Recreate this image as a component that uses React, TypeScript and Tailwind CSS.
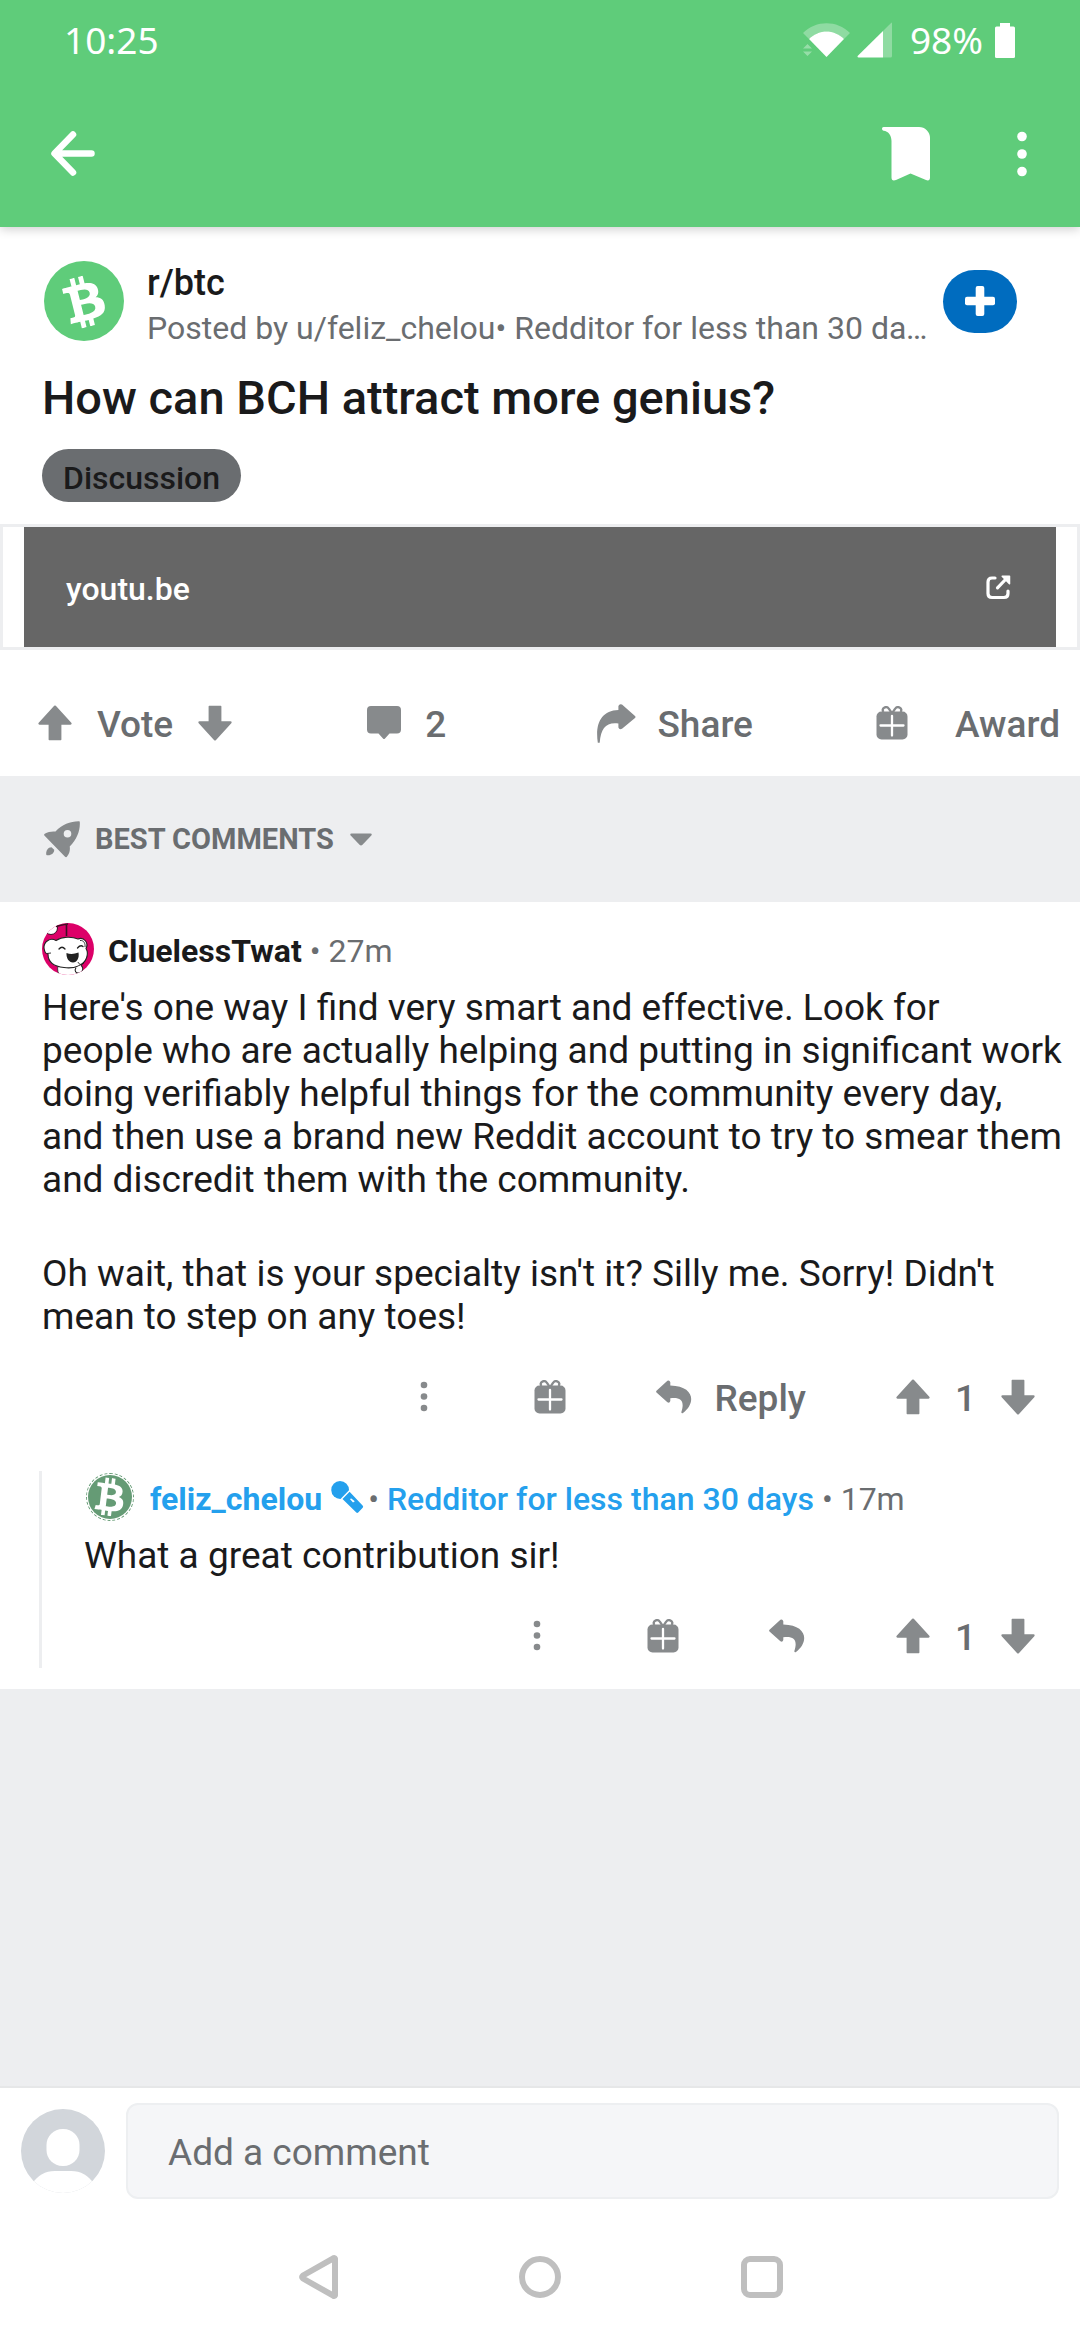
import React from "react";
import { FaBtc } from "react-icons/fa";

type IconProps = { className?: string };

function WifiIcon() {
  return (
    <svg width="47" height="34" viewBox="0 0 47 34" fill="#fff" aria-hidden="true">
      <path d="M0 10 C13 -3 34 -3 47 10 L41 16 C31 6 16 6 6 16 Z" opacity=".3" />
      <path d="M6 16 C16 6 31 6 41 16 L23.5 34 Z" />
      <path d="M4.5 21 L9 25.500 H0 Z M0 28.500 H9 L4.500 33 Z" opacity=".35" />
    </svg>
  );
}

function SignalIcon() {
  return (
    <svg width="35" height="36" viewBox="0 0 35 36" fill="#fff" aria-hidden="true">
      <path d="M26 9 L34.300 .7 Q35 .3 35 1.500 V34 Q35 35.500 33.500 35.500 H26 Z" opacity=".3" />
      <path d="M26 9 V35.500 H1.500 Q0 35.200 .6 34 Z" />
    </svg>
  );
}

function BatteryIcon() {
  return (
    <svg width="20" height="35" viewBox="0 0 20 35" fill="#fff" aria-hidden="true">
      <rect x="5" y="0" width="10" height="8" />
      <rect x="0" y="3.500" width="20" height="31.500" rx="1.500" />
    </svg>
  );
}

function BackIcon() {
  return (
    <svg width="44" height="46" viewBox="0 0 44 46" fill="none" stroke="#fff" strokeWidth="6.500" strokeLinecap="round" strokeLinejoin="round" aria-hidden="true">
      <path d="M22 3.500 L3.500 22.500 L22 41.500 M4 22.500 H40.500" />
      <path d="M9 17.500 L4 22.500 L9 27.500 Z" fill="#fff" strokeWidth="2" />
    </svg>
  );
}

function BookmarkIcon() {
  return (
    <svg width="48" height="54" viewBox="0 0 48 54" fill="#fff" aria-hidden="true">
      <path d="M1.700 0 H37 A11 11 0 0 1 48 11 V50.500 C48 53 46.500 54 44 53 L28.500 46.500 L14 53 C11 54.200 9.500 53 9.500 50.500 V14 C9.500 8 6 4 1.700 3.700 C-.5 3.500 -.5 0 1.700 0 Z" />
    </svg>
  );
}

function HeaderDots() {
  return (
    <svg width="10" height="46" viewBox="0 0 10 46" fill="#fff" aria-hidden="true">
      <circle cx="5" cy="5.500" r="4.800" />
      <circle cx="5" cy="23" r="4.800" />
      <circle cx="5" cy="40.500" r="4.800" />
    </svg>
  );
}

function PlusIcon() {
  return (
    <svg width="30" height="30" viewBox="0 0 30 30" fill="#fff" aria-hidden="true">
      <rect x="10.700" y="0" width="8.600" height="30" rx="2" />
      <rect x="0" y="10.700" width="30" height="8.600" rx="2" />
    </svg>
  );
}

function ExternalIcon() {
  return (
    <svg width="25" height="25" viewBox="0 0 25 25" fill="none" stroke="#fff" strokeWidth="3.200" strokeLinecap="round" strokeLinejoin="round" aria-hidden="true">
      <path d="M9 3 H6 Q2 3 2 7 V18.500 Q2 22.500 6 22.500 H18 Q22 22.500 22 18.500 V16" />
      <path d="M11.500 12.800 L20 4" />
      <path d="M16.200 1.200 H23.500 V8.800 Z" fill="#fff" strokeWidth="1.500" />
    </svg>
  );
}

function ArrowIcon({ className }: IconProps) {
  return (
    <svg width="34" height="36" viewBox="0 0 34 36" fill="#878a8c" className={className} aria-hidden="true">
      <path d="M16.200 .8 Q17 .2 17.800 .8 L33.300 17.800 Q34.300 19.500 32.500 19.700 H23.400 V34.500 Q23.400 35.200 22.700 35.200 H11.300 Q10.600 35.200 10.600 34.500 V19.700 H1.500 Q-.3 19.500 .7 17.800 Z" />
    </svg>
  );
}

function CommentIcon() {
  return (
    <svg width="34" height="34" viewBox="0 0 34 34" fill="#878a8c" aria-hidden="true">
      <path d="M4 0 H30 Q34 0 34 4 V23.500 Q34 27.500 30 27.500 H22.500 L18 32.500 Q17 33.500 16 32.500 L11.500 27.500 H4 Q0 27.500 0 23.500 V4 Q0 0 4 0 Z" />
    </svg>
  );
}

function ShareIcon() {
  return (
    <svg width="39" height="39" viewBox="0 0 39 39" fill="#878a8c" aria-hidden="true">
      <path d="M21.400 6 V2 Q22.500 -.8 25 .6 L38 12 Q39 13 38 14 L25 24.800 Q22.300 26 21.400 23.600 V19.500 C9 18 4 24 2.700 38.700 H.8 C-2 20 4 6.500 21.400 6 Z" />
    </svg>
  );
}

function ReplyIcon() {
  return (
    <svg width="37" height="34" viewBox="0 0 37 34" fill="#878a8c" aria-hidden="true">
      <path d="M14.300 5.400 V2.200 Q13.500 -.4 11.400 .8 L.5 10.800 Q-.3 11.600 .5 12.400 L11.400 22.300 Q13.600 23.400 14.300 21 V18.200 C25 16.800 29 21 25.300 32.200 Q25.600 34 27 33 C39.500 24 39.500 6 14.300 5.400 Z" />
    </svg>
  );
}

function GiftIcon() {
  return (
    <svg width="32" height="34" viewBox="0 0 32 34" fill="none" aria-hidden="true">
      <path d="M7.500 6 C4.500 2.500 10.500 -1 13 3 L16 7.500 L19 3 C21.500 -1 27.500 2.500 24.500 6" stroke="#878a8c" strokeWidth="2.300" />
      <rect x=".5" y="5.500" width="31" height="28" rx="5" fill="#878a8c" />
      <path d="M16 9.800 V29.500 M4.500 19.500 H27.500" stroke="#fff" strokeWidth="2.300" strokeLinecap="round" />
    </svg>
  );
}

function SmallDots() {
  return (
    <svg width="40" height="32" viewBox="0 0 40 32" fill="#878a8c" aria-hidden="true">
      <circle cx="20" cy="4" r="3.300" />
      <circle cx="20" cy="15.500" r="3.300" />
      <circle cx="20" cy="27" r="3.300" />
    </svg>
  );
}

function RocketIcon() {
  return (
    <svg width="36" height="37" viewBox="0 0 36 37" fill="#878a8c" aria-hidden="true">
      <path fillRule="evenodd" d="M35 .3 Q35.800 .2 35.800 1.200 C36.300 9.500 33 18.500 25.700 25.500 C26.300 29 25.500 32.500 23.200 35.300 Q22.300 36.800 20.800 35.600 L.6 14.800 Q-.5 13.600 .8 12.800 C4 11 7.500 10.200 11.500 10.600 C18 3.500 26.500 .2 35 .3 Z M23.500 8.900 A3.800 3.800 0 1 0 23.500 16.500 A3.800 3.800 0 1 0 23.500 8.900 Z" />
      <path d="M2.200 33.500 C1.800 29.500 4 26.200 7.500 26.200 L10.200 28.800 C10.300 32.300 7 34.800 2.800 34.200 Z" />
    </svg>
  );
}

function CaretIcon() {
  return (
    <svg width="22" height="13" viewBox="0 0 22 13" fill="#878a8c" aria-hidden="true">
      <path d="M1.500 .5 H20.500 Q22.500 .8 21.300 2.500 L12.500 11.800 Q11 13.200 9.500 11.800 L.7 2.500 Q-.5 .8 1.500 .5 Z" />
    </svg>
  );
}

function MicIcon() {
  return (
    <svg width="33" height="33" viewBox="0 0 33 33" fill="#24a0ed" className="shrink-0" aria-hidden="true">
      <path d="M9 0 A9 9 0 0 1 18 9.300 L9.500 18 A9 9 0 1 1 9 0 Z" />
      <path fillRule="evenodd" d="M18.600 10.800 L31.800 24.800 Q32.600 25.800 31.700 26.700 L27.200 31.500 Q26.200 32.300 25.300 31.500 L11.500 18 Z M18.900 18 L22 21.600 L23.800 20.300 L20.300 17.400 Z" />
    </svg>
  );
}

function DogAvatar() {
  return (
    <svg width="52" height="52" viewBox="0 0 52 52" className="shrink-0" role="img" aria-label="CluelessTwat avatar">
      <clipPath id="dog">
        <circle cx="26" cy="26" r="26" />
      </clipPath>
      <g clipPath="url(#dog)">
        <rect width="52" height="52" fill="#dc0068" />
        <circle cx="9" cy="5" r="6.500" fill="#fff" stroke="#3b1024" strokeWidth="1" />
        <path d="M14 3.500 C18 2.500 22 1.500 26 1 M24.500 1.500 V13" fill="none" stroke="#3b1024" strokeWidth="1.600" />
        <path d="M16 43 C15 47 16 50 18 53 H34 L38 43 Z" fill="#fff" stroke="#222" strokeWidth=".8" />
        <g fill="#fff" stroke="#222" strokeWidth="1.100">
          <path d="M14 17.500 C8 14 1.500 19 2 25 C2.500 29 4 31 6 31 C6 40 12 43.500 22 44.500 C33 46 42 42 44.500 35 C46 31 45.500 28 44 25.500 C47 20 42 13.500 36 16 C30 13.500 20 13.500 14 17.500 Z" />
          <path d="M34 44.500 C32 48 34 50.500 37 50 C41 50 42 45 39 42" />
        </g>
        <path d="M38 17.500 C42 17 43.500 21 43 24 M5 30.500 L9 30 M36 39 C37 42 40 42 42 40" fill="none" stroke="#222" strokeWidth=".9" />
        <path d="M17 26 Q20 22.500 23 26 M35.500 25 Q38.500 21.500 41 23.500" fill="none" stroke="#222" strokeWidth="1.300" strokeLinecap="round" />
        <path d="M24.500 30 Q30 32 36.500 29.500 C37.500 35 35 39.500 31 39.500 C27 39.500 24 35 24.500 30 Z" fill="#222" />
      </g>
    </svg>
  );
}

function UserAvatar() {
  return (
    <svg width="84" height="84" viewBox="0 0 84 84" className="shrink-0" role="img" aria-label="Your avatar">
      <clipPath id="user">
        <circle cx="42" cy="42" r="42" />
      </clipPath>
      <g clipPath="url(#user)">
        <rect width="84" height="84" fill="#d2d6db" />
        <rect x="25.500" y="20" width="33" height="37" rx="16" fill="#fff" />
        <path d="M11 75 C17 66 24 62 34 62 H50 C60 62 67 66 73 75 V84 H11 Z" fill="#fff" />
      </g>
    </svg>
  );
}

function VoteGroup() {
  return (
    <div className="flex items-center gap-[25px]">
      <button type="button" aria-label="Upvote"><ArrowIcon /></button>
      <span className="pt-1">1</span>
      <button type="button" aria-label="Downvote"><ArrowIcon className="rotate-180" /></button>
    </div>
  );
}

function CommentActions({ label }: { label?: string }) {
  return (
    <div className="mt-[33px] flex h-[52px] items-center justify-end gap-[90px] pr-[45px] text-[37px] leading-[44px] font-medium text-[#6a6d70]">
      <button type="button" aria-label="More options"><SmallDots /></button>
      <button type="button" aria-label="Give award"><GiftIcon /></button>
      <button type="button" aria-label="Reply" className="flex items-center gap-[22px]">
        <ReplyIcon />
        {label && <span className="pt-1">{label}</span>}
      </button>
      <VoteGroup />
    </div>
  );
}

export default function App() {
  return (
    <div className="flex min-h-screen flex-col bg-[#edeef0] font-['Roboto',sans-serif] text-[#1a1a1b]">
      <header className="relative bg-[#5fcc7a] shadow-[0_2px_10px_rgba(0,0,0,0.2)]">
        <div className="flex h-20 items-center justify-between pr-[65px] pl-16 font-['Noto_Sans','Open_Sans',sans-serif] text-[37px] text-white">
          <span>10:25</span>
          <div className="flex items-center">
            <WifiIcon />
            <span className="ml-[7px]"><SignalIcon /></span>
            <span className="ml-[18px]">98%</span>
            <span className="ml-3"><BatteryIcon /></span>
          </div>
        </div>
        <div className="flex h-[147px] items-center justify-between pr-[53px] pl-[51px]">
          <button type="button" aria-label="Back"><BackIcon /></button>
          <div className="flex items-center gap-[87px]">
            <button type="button" aria-label="Save post"><BookmarkIcon /></button>
            <button type="button" aria-label="More options"><HeaderDots /></button>
          </div>
        </div>
      </header>

      <main>
        <article className="bg-white">
          <div className="pt-[34px] pl-[42px]">
            <div className="flex items-start pr-[63px]">
              <div className="mr-[23px] ml-[2px] flex size-20 shrink-0 items-center justify-center rounded-full bg-[#5fcc7a]">
                <FaBtc size={51} color="#fff" className="-rotate-[14deg]" />
              </div>
              <div className="min-w-0 flex-1 pt-px">
                <a href="#btc" className="block text-[36px] leading-[42px] font-medium">r/btc</a>
                <p className="mt-1 truncate text-[32px] leading-[40px] text-[#6a6d70]">
                  Posted by u/feliz_chelou• Redditor for less than 30 days
                </p>
              </div>
              <div className="ml-3 flex h-20 items-center">
                <button type="button" aria-label="Join community" className="flex h-[63px] w-[74px] items-center justify-center rounded-full bg-[#006cbf]">
                  <PlusIcon />
                </button>
              </div>
            </div>
            <h1 className="mt-[22px] text-[47px] leading-[56px] font-medium">How can BCH attract more genius?</h1>
            <span className="mt-[23px] flex h-[53px] w-fit items-center rounded-full bg-[#6a6d70] px-[21px] pt-1 text-[32px] leading-[38px] font-medium">Discussion</span>
          </div>

          <div className="mt-[22px] border-[3px] border-[#edeef0] px-[21px]">
            <a href="#youtu.be" className="flex h-[120px] items-center justify-between bg-[#666] pr-[45px] pl-[42px] text-[32px] font-medium text-white">
              <span className="pt-1">youtu.be</span>
              <ExternalIcon />
            </a>
          </div>

          <div className="flex h-[126px] items-center justify-between pt-5 pr-5 pl-[38px] text-[37px] leading-[44px] font-medium text-[#6a6d70]">
            <div className="flex items-center gap-[25px]">
              <button type="button" aria-label="Upvote"><ArrowIcon /></button>
              <span className="pt-1">Vote</span>
              <button type="button" aria-label="Downvote"><ArrowIcon className="rotate-180" /></button>
            </div>
            <button type="button" aria-label="2 comments" className="flex items-center gap-6 pr-7 pl-3">
              <CommentIcon />
              <span className="pt-1">2</span>
            </button>
            <button type="button" className="flex items-center gap-[21px]">
              <ShareIcon />
              <span className="pt-1">Share</span>
            </button>
            <button type="button" className="flex items-center gap-[47px]">
              <GiftIcon />
              <span className="pt-1">Award</span>
            </button>
          </div>
        </article>

        <div className="flex h-[126px] items-center pl-11">
          <button type="button" className="flex items-center text-[29px] leading-[36px] font-bold text-[#6a6d70]">
            <RocketIcon />
            <span className="mr-4 ml-[15px]">BEST COMMENTS</span>
            <CaretIcon />
          </button>
        </div>

        <section aria-label="Comments" className="bg-white pt-[21px] pb-[21px]">
          <article>
            <div className="flex h-[52px] items-center pl-[42px] text-[32px]">
              <DogAvatar />
              <p className="pt-1 pl-[14px]">
                <a href="#CluelessTwat" className="font-bold">CluelessTwat</a>
                <span className="text-[#6a6d70]"> • 27m</span>
              </p>
            </div>
            <div className="mt-[11px] space-y-[51px] pr-4 pl-[42px] text-[37px] leading-[43px]">
              <p>
                Here's one way I find very smart and effective. Look for
                <br />
                people who are actually helping and putting in significant work doing verifiably helpful things for the community every day, and then use a brand new Reddit account to try to smear them and discredit them with the community.
              </p>
              <p>Oh wait, that is your specialty isn't it? Silly me. Sorry! Didn't mean to step on any toes!</p>
            </div>
            <CommentActions label="Reply" />
          </article>

          <article className="mt-12 ml-[39px] border-l-[3px] border-[#edeef0] pt-[2px] pb-[6px]">
            <div className="flex h-12 items-center pl-11 text-[32px]">
              <div className="flex size-12 shrink-0 items-center justify-center rounded-full border border-dashed border-[#659b75] p-[1px]">
                <div className="flex size-11 items-center justify-center rounded-full bg-[#659b75]">
                  <FaBtc size={38} color="#fff" className="rotate-[7deg]" />
                </div>
              </div>
              <a href="#feliz_chelou" className="ml-4 pt-1 font-bold text-[#24a0ed]">feliz_chelou</a>
              <span className="ml-[9px]"><MicIcon /></span>
              <p className="pt-1 pl-1 text-[#6a6d70]">
                • <span className="font-medium text-[#24a0ed]">Redditor for less than 30 days</span> • 17m
              </p>
            </div>
            <p className="mt-[13px] pl-[42px] text-[37px] leading-[43px]">What a great contribution sir!</p>
            <CommentActions />
          </article>
        </section>
      </main>

      <footer className="mt-auto border-t-2 border-[#e6e7e8] bg-white pt-[15px]">
        <div className="flex h-24 items-center gap-[21px] px-[21px]">
          <UserAvatar />
          <input
            type="text"
            aria-label="Add a comment"
            placeholder="Add a comment"
            className="h-24 min-w-0 flex-1 rounded-[12px] border-2 border-[#edeff1] bg-[#f5f6f8] px-10 pt-[2px] text-[37px] placeholder:text-[#6a6d70] placeholder:opacity-100"
          />
        </div>
        <nav aria-label="System navigation" className="mt-[15px] flex h-[126px] items-center justify-center gap-[180px]">
          <button type="button" aria-label="System back">
            <svg width="42" height="44" viewBox="0 0 42 44" fill="none" stroke="#bfbfbf" strokeWidth="6" strokeLinejoin="round" aria-hidden="true">
              <path d="M38 3.800 V40.200 Q37.500 41.300 36.300 40.700 L6 23.500 Q4.500 22 6 20.500 L36.300 3.300 Q37.500 2.700 38 3.800 Z" />
            </svg>
          </button>
          <button type="button" aria-label="Home" className="size-[42px] rounded-full border-[6px] border-[#bfbfbf]" />
          <button type="button" aria-label="Recent apps" className="size-[42px] rounded-[9px] border-[6px] border-[#bfbfbf]" />
        </nav>
      </footer>
    </div>
  );
}
